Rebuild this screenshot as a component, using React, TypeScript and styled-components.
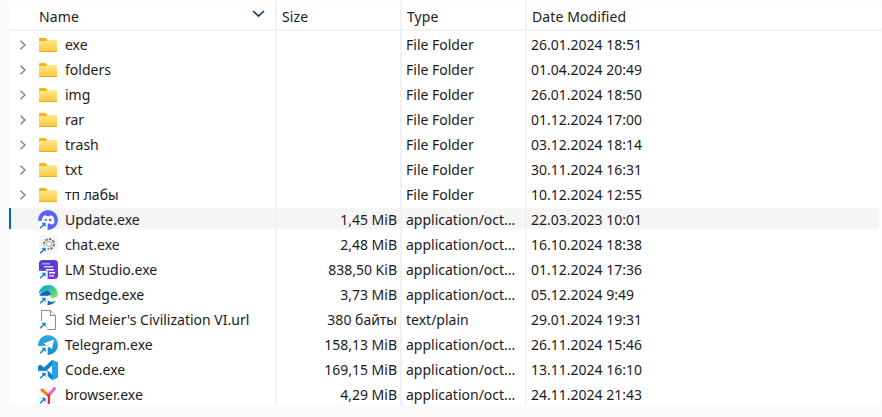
import styled, { createGlobalStyle } from 'styled-components';

const GlobalStyle = createGlobalStyle`
  html, body {
    margin: 0;
    padding: 0;
    height: 100%;
    background: #f9f9f9;
  }
  body {
    font-family: "Noto Sans", "Noto Sans CJK SC", sans-serif;
    color: #1b1b1b;
  }
`;

type IconKind = 'folder' | 'discord' | 'chat' | 'lm' | 'edge' | 'doc' | 'telegram' | 'code' | 'yandex';

interface FileRow {
  name: string;
  size?: string;
  type: string;
  date: string;
  icon: IconKind;
  active?: boolean;
}

const rows: FileRow[] = [
  { name: 'exe', type: 'File Folder', date: '26.01.2024 18:51', icon: 'folder' },
  { name: 'folders', type: 'File Folder', date: '01.04.2024 20:49', icon: 'folder' },
  { name: 'img', type: 'File Folder', date: '26.01.2024 18:50', icon: 'folder' },
  { name: 'rar', type: 'File Folder', date: '01.12.2024 17:00', icon: 'folder' },
  { name: 'trash', type: 'File Folder', date: '03.12.2024 18:14', icon: 'folder' },
  { name: 'txt', type: 'File Folder', date: '30.11.2024 16:31', icon: 'folder' },
  { name: 'тп лабы', type: 'File Folder', date: '10.12.2024 12:55', icon: 'folder' },
  { name: 'Update.exe', size: '1,45 MiB', type: 'application/oct...', date: '22.03.2023 10:01', icon: 'discord', active: true },
  { name: 'chat.exe', size: '2,48 MiB', type: 'application/oct...', date: '16.10.2024 18:38', icon: 'chat' },
  { name: 'LM Studio.exe', size: '838,50 KiB', type: 'application/oct...', date: '01.12.2024 17:36', icon: 'lm' },
  { name: 'msedge.exe', size: '3,73 MiB', type: 'application/oct...', date: '05.12.2024 9:49', icon: 'edge' },
  { name: "Sid Meier's Civilization VI.url", size: '380 байты', type: 'text/plain', date: '29.01.2024 19:31', icon: 'doc' },
  { name: 'Telegram.exe', size: '158,13 MiB', type: 'application/oct...', date: '26.11.2024 15:46', icon: 'telegram' },
  { name: 'Code.exe', size: '169,15 MiB', type: 'application/oct...', date: '13.11.2024 16:10', icon: 'code' },
  { name: 'browser.exe', size: '4,29 MiB', type: 'application/oct...', date: '24.11.2024 21:43', icon: 'yandex' },
];

// small arrow badge that windows puts on shortcuts
const Shortcut = () => (
  <g>
    <rect x="0" y="11" width="9.5" height="9" rx="1" fill="#fff" stroke="#e4e4e4" strokeWidth="0.5" />
    <path d="M2.2 18.2 L6.4 14" stroke="#0f7fd6" strokeWidth="1.5" fill="none" />
    <path d="M3.4 12.8 H7.6 V17 Z" fill="#0f7fd6" />
  </g>
);

const FileIcon = ({ kind }: { kind: IconKind }) => {
  switch (kind) {
    case 'folder':
      return (
        <svg width="20" height="20" viewBox="0 0 20 20">
          <defs>
            <linearGradient id="folderBody" x1="0" y1="0" x2="0" y2="1">
              <stop offset="0" stopColor="#ffe88f" />
              <stop offset="1" stopColor="#fcc63d" />
            </linearGradient>
          </defs>
          <path d="M1 4 Q1 3 2 3 H7.5 L9.5 5 V7 H1 Z" fill="#f6b511" />
          <path d="M1 6 H8 L9.5 5 H18 Q19 5 19 6 V16 Q19 17 18 17 H2 Q1 17 1 16 Z" fill="url(#folderBody)" />
          <rect x="1" y="16" width="18" height="1" fill="#eaa91f" />
        </svg>
      );
    case 'discord':
      return (
        <svg width="20" height="20" viewBox="0 0 20 20">
          <circle cx="10" cy="10" r="10" fill="#5865f2" />
          <path d="M5 6.4 Q7 5.2 8.2 5.4 L8.6 6.2 H11.4 L11.8 5.4 Q13.6 5.4 15.2 6.6 Q16.6 9.6 16.4 13.2 Q14.8 14.4 13.2 14.6 L12.4 13.4 H7.6 L6.8 14.6 Q5 14.4 3.6 13.2 Q3.6 9.6 5 6.4 Z" fill="#fff" />
          <circle cx="7.8" cy="10" r="1.3" fill="#5865f2" />
          <circle cx="12.2" cy="10" r="1.3" fill="#5865f2" />
          <Shortcut />
        </svg>
      );
    case 'chat':
      return (
        <svg width="20" height="20" viewBox="0 0 20 20">
          <rect x="1" y="0" width="19" height="19" rx="4" fill="#f5f6f4" />
          <circle cx="11" cy="9" r="5" fill="none" stroke="#6f7a70" strokeWidth="2" strokeDasharray="2.6 1.2" />
          <circle cx="11" cy="9" r="2.6" fill="none" stroke="#a4aca4" strokeWidth="1" />
          <Shortcut />
        </svg>
      );
    case 'lm':
      return (
        <svg width="20" height="20" viewBox="0 0 20 20">
          <defs>
            <linearGradient id="lmBody" x1="0" y1="0" x2="1" y2="1">
              <stop offset="0" stopColor="#4b3fd8" />
              <stop offset="1" stopColor="#7a35d6" />
            </linearGradient>
          </defs>
          <rect x="1" y="0" width="19" height="19" rx="3.5" fill="url(#lmBody)" />
          <rect x="4" y="3" width="8" height="1.5" fill="#a8a2f2" />
          <rect x="6" y="6" width="9" height="1.5" fill="#d3cff9" />
          <rect x="8" y="9" width="8" height="1.5" fill="#fff" />
          <rect x="11" y="12" width="6" height="1.5" fill="#fff" />
          <rect x="11" y="15" width="5" height="1.5" fill="#d3cff9" />
          <Shortcut />
        </svg>
      );
    case 'edge':
      return (
        <svg width="20" height="20" viewBox="0 0 20 20">
          <defs>
            <linearGradient id="edgeTop" x1="0" y1="0" x2="1" y2="0.7">
              <stop offset="0" stopColor="#0f9ad6" />
              <stop offset="0.6" stopColor="#2fc4a0" />
              <stop offset="1" stopColor="#8fe060" />
            </linearGradient>
          </defs>
          <path d="M0.5 9 C1.5 3 6 0 10.5 0 C16 0 20 4.5 20 9.5 C20 12 17.5 13 15 13 C13 13 12 12 13 10.5 C14 9 12.5 6 9 6 C5 6 2 7.5 0.5 9 Z" fill="url(#edgeTop)" />
          <path d="M9 6 C5 6 1 8.5 1 13 C1 17 4.5 20 9 20 C7 18.5 6.5 15.5 8 13 C9 11 11 9.5 13 10.5 C13.5 8 11.5 6 9 6 Z" fill="#0c6bb8" />
          <path d="M9 20 C12 20.2 15.5 19 18 16 C16 16.8 13.5 17 12 16.4 C10 15.6 8.5 14.5 8 13 C6.5 15.5 7 18.5 9 20 Z" fill="#1573b5" />
          <Shortcut />
        </svg>
      );
    case 'doc':
      return (
        <svg width="20" height="20" viewBox="0 0 20 20">
          <path d="M3.5 0.5 H12.5 L17.5 5.5 V19.5 H3.5 Z" fill="#fff" stroke="#8d8d8d" />
          <path d="M12.5 0.5 V5.5 H17.5" fill="#f4f4f4" stroke="#8d8d8d" />
          <Shortcut />
        </svg>
      );
    case 'telegram':
      return (
        <svg width="20" height="20" viewBox="0 0 20 20">
          <defs>
            <linearGradient id="tgBody" x1="0.5" y1="0" x2="0.5" y2="1">
              <stop offset="0" stopColor="#2fa8e0" />
              <stop offset="1" stopColor="#1b8fcb" />
            </linearGradient>
          </defs>
          <circle cx="10" cy="10" r="10" fill="url(#tgBody)" />
          <path d="M5.5 8.6 L16 4.4 L14 14 L10.8 11.8 L9.2 13.4 L8.6 10.4 Z" fill="#fff" />
          <path d="M8.6 10.4 L14 6.6 L10 11.2 L9.2 13.4 Z" fill="#c8daea" />
          <Shortcut />
        </svg>
      );
    case 'code':
      return (
        <svg width="20" height="20" viewBox="0 0 20 20">
          <path d="M14 0 L20 2.6 V17.4 L14 20 L6 12.4 L2.4 15.2 L0 14 V6 L2.4 4.8 L6 7.6 Z M14 5.4 L9 10 L14 14.6 Z" fill="#0f7fc9" fillRule="evenodd" />
          <path d="M14 0 L20 2.6 V17.4 L14 20 Z" fill="#27a0ea" />
          <Shortcut />
        </svg>
      );
    case 'yandex':
      return (
        <svg width="20" height="20" viewBox="0 0 20 20">
          <circle cx="10" cy="10" r="10" fill="#fbfafa" />
          <path d="M4 5 L10.5 10.5" stroke="#ff7a1a" strokeWidth="3" strokeLinecap="round" />
          <path d="M16.5 3.5 L10.5 10.5" stroke="#f560b4" strokeWidth="3" strokeLinecap="round" />
          <path d="M10.5 10.5 V17.5" stroke="#f0282d" strokeWidth="3" strokeLinecap="round" />
          <Shortcut />
        </svg>
      );
  }
};

const Chevron = () => (
  <svg width="8" height="10" viewBox="0 0 8 10">
    <path d="M1.5 0.8 L6 5 L1.5 9.2" fill="none" stroke="#7c7c7c" strokeWidth="1.3" />
  </svg>
);

const SortArrow = () => (
  <svg width="13" height="8" viewBox="0 0 13 8">
    <path d="M1 1 L6.5 6.2 L12 1" fill="none" stroke="#1a3b5c" strokeWidth="1.7" />
  </svg>
);

const Page = styled.div`
  padding: 1px 1px 0 9px;
  height: 417px;
  box-sizing: border-box;
  overflow: hidden;
`;

const Panel = styled.div`
  height: 404px;
  background: #fff;
  overflow: hidden;
`;

const Columns = styled.div`
  display: grid;
  grid-template-columns: 268px 125px 125px 1fr;
`;

const Header = styled(Columns)`
  height: 30px;
  box-sizing: border-box;
  border-bottom: 2px solid #f1f1f1;
`;

const HeaderCell = styled.div<{ $last?: boolean }>`
  display: flex;
  align-items: center;
  justify-content: space-between;
  padding: 2px 10px 0 5px;
  font-size: 14px;
  letter-spacing: 0.1px;
  color: #1b1b1b;
  border-right: ${(p) => (p.$last ? 'none' : '2px solid #f1f1f1')};
`;

const NameHeaderCell = styled(HeaderCell)`
  padding-left: 30px;

  svg {
    margin-top: -5px;
  }
`;

const Row = styled(Columns)<{ $active?: boolean }>`
  position: relative;
  height: 25px;
  font-size: 14px;

  ${(p) =>
    p.$active &&
    `
    &::before {
      content: '';
      position: absolute;
      left: 2px;
      right: 2px;
      top: 2px;
      bottom: 2px;
      background: #f5f5f5;
      border-radius: 4px;
    }
    &::after {
      content: '';
      position: absolute;
      left: 0;
      top: 2px;
      bottom: 2px;
      width: 2px;
      background: #0067c0;
    }
  `}
`;

const Cell = styled.div<{ $last?: boolean }>`
  position: relative;
  z-index: 1;
  display: flex;
  align-items: center;
  min-width: 0;
  white-space: nowrap;
  padding: 2px 3px 0 4px;
  border-right: ${(p) => (p.$last ? 'none' : '2px solid #f1f1f1')};
`;

const NameCell = styled(Cell)`
  padding-left: 10px;
`;

const SizeCell = styled(Cell)`
  justify-content: flex-end;
`;

const ExpandSlot = styled.span`
  display: flex;
  width: 19px;
  flex: none;
`;

const IconSlot = styled.span`
  display: flex;
  width: 27px;
  flex: none;
`;

export default function App() {
  return (
    <>
      <GlobalStyle />
      <Page>
        <Panel>
          <Header>
            <NameHeaderCell>
              Name
              <SortArrow />
            </NameHeaderCell>
            <HeaderCell>Size</HeaderCell>
            <HeaderCell>Type</HeaderCell>
            <HeaderCell $last>Date Modified</HeaderCell>
          </Header>
          {rows.map((row) => (
            <Row key={row.name} $active={row.active}>
              <NameCell>
                <ExpandSlot>{row.icon === 'folder' && <Chevron />}</ExpandSlot>
                <IconSlot>
                  <FileIcon kind={row.icon} />
                </IconSlot>
                {row.name}
              </NameCell>
              <SizeCell>{row.size}</SizeCell>
              <Cell>{row.type}</Cell>
              <Cell $last>{row.date}</Cell>
            </Row>
          ))}
        </Panel>
      </Page>
    </>
  );
}
